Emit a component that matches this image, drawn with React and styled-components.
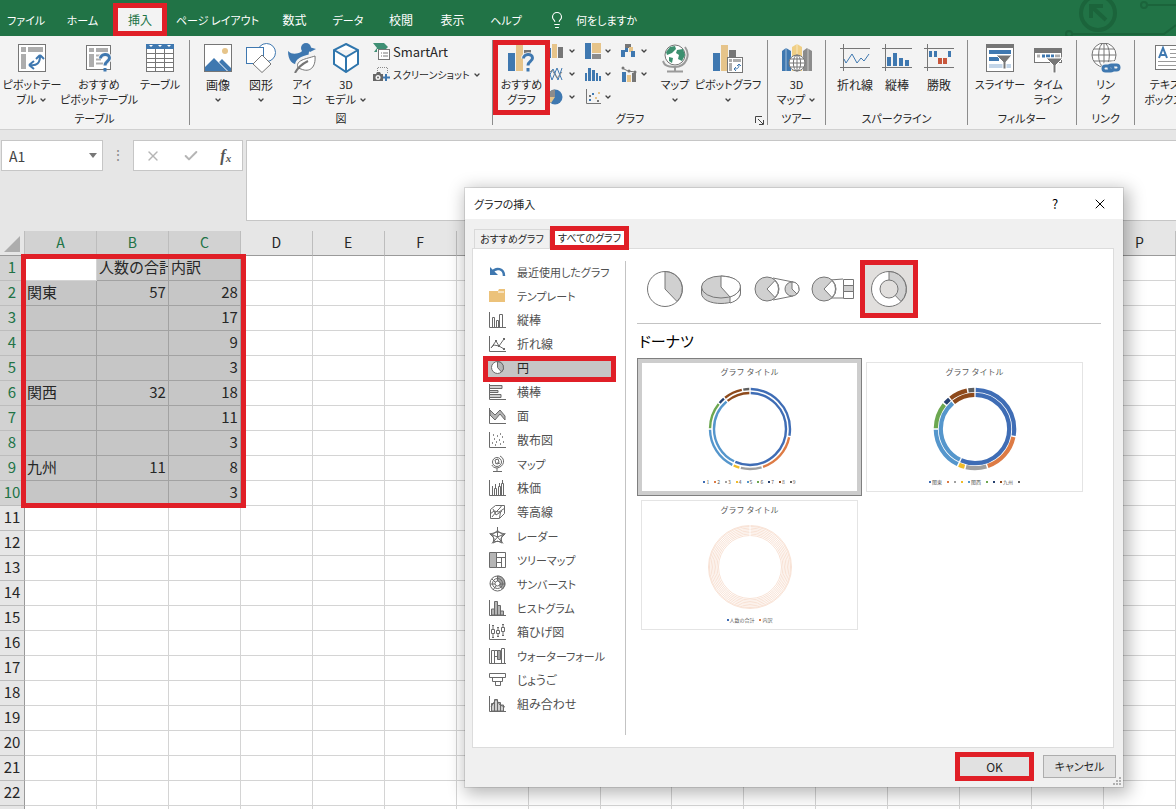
import React, { useState } from "react";
import styled, { createGlobalStyle, css } from "styled-components";
import { ChevronDown, Lightbulb, X, Check } from "lucide-react";

const GRAY = "#767676";
const BLUE = "#3f78b0";
const TAN = "#e6c48a";
const RED = "#e01f27";

const GlobalStyle = createGlobalStyle`
    * {
        box-sizing: border-box;
    }
    body {
        margin: 0;
        font-family: "Noto Sans CJK JP", "Liberation Sans", sans-serif;
        font-size: 12px;
        color: #262626;
        font-feature-settings: "palt";
    }
    button, input {
        font: inherit;
        font-feature-settings: inherit;
        color: inherit;
        border: 0;
        padding: 0;
        margin: 0;
        background: none;
    }
    svg {
        display: block;
        flex: none;
    }
`

// thick red frame around whatever the reader has to click
const marker = css`
    outline: 5px solid ${RED};
    position: relative;
    z-index: 1;
`

const Page = styled.div`
    position: relative;
    height: 100vh;
    overflow: hidden;
    display: flex;
    flex-direction: column;
    background: #fff;
`

/* ---------- tab strip ---------- */

const TabStrip = styled.nav`
    display: flex;
    align-items: flex-end;
    height: 36px;
    flex: none;
    background: #217346;
    overflow: hidden;
`

const RibbonTab = styled.button`
    flex: none;
    width: ${props => props.$width}px;
    height: 33px;
    font-size: ${props => props.$compact ? 11 : 12}px;
    color: #fff;
    white-space: nowrap;
    ${props => props.$active && css`
        ${marker}
        outline-offset: -5px;
        background: #f3f3f3;
        color: #217346;
    `}
`

const TellMe = styled.button`
    display: flex;
    align-items: center;
    gap: 10px;
    height: 33px;
    margin-left: 14px;
    font-size: 11px;
    color: #fff;
    white-space: nowrap;
`

const Circuit = styled.svg`
    margin-left: auto;
`

/* ---------- ribbon ---------- */

const RibbonBar = styled.div`
    display: flex;
    flex: none;
    height: 94px;
    padding: 4px 0;
    background: #f3f3f3;
    border-bottom: 1px solid #d0d0d0;
`

const Group = styled.section`
    display: flex;
    flex-direction: column;
    flex: none;
    justify-content: space-between;
    border-right: 1px solid #8c8c8c;
    &:last-child {
        border-right: 0;
    }
`

const GroupBody = styled.div`
    display: flex;
    height: 71px;
    padding: 0 ${props => props.$right || 0}px 0 ${props => props.$left || 0}px;
`

const GroupFooter = styled.div`
    position: relative;
    text-align: center;
    line-height: 14px;
    font-size: 11px;
    min-height: 14px;
`

const Launcher = styled.button`
    position: absolute;
    right: 3px;
    bottom: 0;
`

const BigButton = styled.button`
    display: flex;
    flex-direction: column;
    align-items: center;
    flex: none;
    width: ${props => props.$width}px;
    height: 75px;
    padding-top: 3px;
    font-size: ${props => props.$compact ? 11 : 12}px;
    line-height: 15px;
    white-space: nowrap;
    span {
        display: flex;
        align-items: center;
        gap: 3px;
        height: 15px;
    }
    svg + span {
        margin-top: 4px;
    }
    ${props => props.$marked && css`
        ${marker}
        outline-offset: -5px;
    `}
`

const SideList = styled.div`
    display: flex;
    flex-direction: column;
    width: 121px;
    padding-left: 2px;
`

const SideButton = styled.button`
    display: flex;
    align-items: center;
    gap: 3px;
    height: 23px;
    font-size: ${props => props.$compact ? 10 : 13}px;
    white-space: nowrap;
`

const ChartGrid = styled.div`
    display: grid;
    grid-template-columns: repeat(3, 36px);
    grid-auto-rows: 23px;
    margin: -1px 0 0 -2px;
`

const ChartMenu = styled.button`
    display: flex;
    align-items: center;
    gap: 2px;
`

/* ---------- formula bar ---------- */

const FormulaBar = styled.div`
    display: flex;
    align-items: flex-start;
    flex: none;
    height: 101px;
    padding: 10px 0 10px 1px;
    background: #e6e6e6;
`

const NameBox = styled.div`
    display: flex;
    align-items: center;
    width: 102px;
    height: 31px;
    padding: 0 5px 0 7px;
    background: #fff;
    border: 1px solid #c6c6c6;
    input {
        flex: 1;
        min-width: 0;
        font-size: 14px;
        color: #444;
        outline: 0;
    }
`

const Grip = styled.div`
    width: 30px;
    line-height: 29px;
    text-align: center;
    font-size: 14px;
    color: #8c8c8c;
`

const FormulaButtons = styled.div`
    display: flex;
    align-items: center;
    justify-content: space-around;
    width: 110px;
    height: 31px;
    background: #fff;
    border: 1px solid #c6c6c6;
`

const FxButton = styled.button`
    font-family: "Liberation Serif", serif;
    font-style: italic;
    font-weight: bold;
    font-size: 16px;
    color: #555;
    sub {
        font-size: 11px;
        vertical-align: -1px;
    }
`

const FormulaInput = styled.input`
    flex: 1;
    height: 81px;
    margin-left: 3px;
    background: #fff;
    border: 1px solid #c6c6c6;
    border-right: 0;
`

/* ---------- sheet ---------- */

const SheetArea = styled.main`
    position: relative;
    flex: 1;
    min-height: 0;
    overflow: hidden;
`

const Sheet = styled.table`
    width: 100%;
    table-layout: fixed;
    border-collapse: separate;
    border-spacing: 0;
    font-size: 15px;
    font-feature-settings: normal;
    th:first-child {
        width: 25px;
    }
`

const ColHead = styled.th`
    height: 25px;
    padding: 0;
    font-weight: normal;
    font-size: 14px;
    line-height: 22px;
    vertical-align: top;
    color: ${props => props.$on ? "#217346" : "#262626"};
    background: ${props => props.$on ? "#d2d2d2" : "#e6e6e6"};
    border-right: 1px solid #bdbdbd;
    border-bottom: 1px solid #9a9a9a;
    svg {
        margin: 5px 0 0 4px;
    }
`

const RowHead = styled(ColHead)`
    font-size: 15px;
    border-right-color: #9a9a9a;
    border-bottom-color: #bdbdbd;
`

const Cell = styled.td`
    height: 25px;
    padding: 0 2px;
    line-height: 22px;
    vertical-align: top;
    white-space: nowrap;
    overflow: hidden;
    text-align: ${props => props.$number ? "right" : "left"};
    background: ${props => props.$on ? "#c6c6c6" : "#fff"};
    border-right: 1px solid ${props => props.$on ? "#a2a2a2" : "#d4d4d4"};
    border-bottom: 1px solid ${props => props.$on ? "#a2a2a2" : "#d4d4d4"};
`

const RangeFrame = styled.div`
    position: absolute;
    left: 21px;
    top: 23px;
    width: calc((100% - 25px) / 16 * 3 + 9px);
    height: 254px;
    border: 5px solid ${RED};
    pointer-events: none;
`

/* ---------- dialog ---------- */

const DialogBox = styled.div`
    position: absolute;
    left: 465px;
    top: 188px;
    z-index: 5;
    width: 658px;
    background: #f0f0f0;
    box-shadow: 0 0 0 1px rgba(0, 0, 0, 0.1), 3px 4px 16px 3px rgba(0, 0, 0, 0.28);
`

const TitleBar = styled.header`
    display: flex;
    align-items: center;
    height: 31px;
    padding: 0 15px 0 9px;
    background: #fff;
    h1 {
        flex: 1;
        margin: 0;
        font-size: 11px;
        line-height: 14px;
        font-weight: normal;
    }
    button {
        width: 16px;
        font-size: 13px;
        line-height: 16px;
        color: #000;
    }
    button + button {
        margin-left: 29px;
    }
`

const DialogTabs = styled.div`
    display: flex;
    align-items: flex-end;
    height: 29px;
    padding-left: 9px;
`

const DialogTab = styled.button`
    height: 19px;
    width: 76px;
    font-size: 10px;
    line-height: 18px;
    white-space: nowrap;
    border: 1px solid #d9d9d9;
    border-bottom: 0;
    ${props => props.$active && css`
        ${marker}
        outline-offset: -5px;
        width: 79px;
        height: 24px;
        margin-bottom: -2px;
        border: 0;
        background: #fff;
    `}
`

const Panel = styled.div`
    display: flex;
    margin: 0 9px 0 7px;
    height: 500px;
    background: #fff;
    border: 1px solid #dcdcdc;
`

const TypeList = styled.ul`
    list-style: none;
    margin: 12px 0 12px 11px;
    padding: 0 10px 0 0;
    border-right: 1px solid #c3c3c3;
`

const TypeItem = styled.button`
    display: flex;
    align-items: center;
    gap: 11px;
    width: 131px;
    height: 24px;
    padding: 0 0 3px 5px;
    font-size: ${props => props.$compact ? 11 : 12}px;
    color: #505050;
    white-space: nowrap;
    ${props => props.$active && css`
        ${marker}
        outline-offset: -4px;
        background: #c6c6c6;
        color: #262626;
    `}
`

const Preview = styled.div`
    flex: 1;
    padding: 12px 12px 0 10px;
    h2 {
        margin: 6px 0 6px 3px;
        font-size: 15px;
        line-height: 22px;
        font-weight: normal;
        color: #000;
    }
`

const Subtypes = styled.div`
    display: flex;
    padding-bottom: 6px;
    margin-left: 1px;
    border-bottom: 1px solid #c3c3c3;
`

const Subtype = styled.button`
    display: flex;
    align-items: center;
    justify-content: center;
    width: 56px;
    height: 56px;
    ${props => props.$active && css`
        ${marker}
        outline-offset: -4px;
        background: #e1dfdd;
    `}
`

const Gallery = styled.div`
    display: flex;
    flex-wrap: wrap;
    margin-left: 1px;
`

const Thumb = styled.button`
    width: 225px;
    height: 138px;
    padding: 3px;
    border: 1px solid ${props => props.$active ? "#7f7f7f" : "transparent"};
    background: ${props => props.$active ? "#cdcdcd" : "none"};
`

const ThumbPaper = styled.div`
    display: flex;
    flex-direction: column;
    align-items: center;
    height: 130px;
    padding-top: 3px;
    background: #fff;
    border: 1px solid ${props => props.$active ? "#cdcdcd" : "#e4e4e4"};
`

const ThumbTitle = styled.div`
    font-size: 8px;
    line-height: 12px;
    color: #595959;
    font-feature-settings: normal;
    margin-bottom: 9px;
`

const Legend = styled.div`
    display: flex;
    gap: 5px;
    margin-top: 7px;
    font-size: 5px;
    line-height: 8px;
    color: #595959;
    span {
        display: flex;
        align-items: center;
        gap: 1px;
    }
`

const Swatch = styled.i`
    width: 2px;
    height: 2px;
    background: ${props => props.$color};
`

const DialogFooter = styled.footer`
    display: flex;
    justify-content: flex-end;
    gap: 12px;
    height: 39px;
    padding: 7px 7px 0 0;
`

const PushButton = styled.button`
    width: 73px;
    height: 23px;
    font-size: ${props => props.$compact ? 11 : 12}px;
    line-height: 19px;
    background: #e1e1e1;
    border: 1px solid #adadad;
    ${props => props.$marked && css`
        ${marker}
        outline-offset: -2px;
    `}
`

const ResizeGrip = styled.svg`
    position: absolute;
    right: 2px;
    bottom: 2px;
`

/* ---------- icons ---------- */

const Big = ({ children }) => (
    <svg width="30" height="30" viewBox="0 0 30 30" fill="none" stroke={GRAY}>{children}</svg>
)
const Small = ({ children }) => (
    <svg width="18" height="18" viewBox="0 0 18 18" fill="none" stroke="none">{children}</svg>
)
const Mini = ({ children }) => (
    <svg width="17" height="17" viewBox="0 0 17 17" fill="none" stroke="#6a6a6a">{children}</svg>
)
const Chevron = () => <ChevronDown size={8} strokeWidth={4} color="#444" />

const Question = () => (
    <>
        <path d="M16.5 15.5c0-4.5 9-5.500 9-.5 0 3.500-4.500 3.500-4.500 7.500" stroke="#f3f3f3" strokeWidth="5" />
        <path d="M16.500 15.500c0-5 9-5.500 9-.5 0 3.500-4.500 3.500-4.500 7.500M21 25v3.500" stroke={BLUE} strokeWidth="3" />
    </>
)

const PivotArt = () => (
    <>
        <rect x="1.500" y="1.500" width="27" height="27" fill="#fff" stroke={GRAY} />
        <path d="M4 4h5v5H4zM11 4h15v5H11zM4 11h5v15H4z" fill="#adadad" stroke="none" />
        <path d="M13 22c7 1 10-2 10-9M23 12l-4 4M23 12l4 4M12 22l5-4M12 22l5 4" stroke={BLUE} strokeWidth="2" />
    </>
)

const GlobeLines = ({ cx, cy, r, fill = "#fff" }) => (
    <g>
        <circle cx={cx} cy={cy} r={r} fill={fill} />
        <ellipse cx={cx} cy={cy} rx={r * 0.45} ry={r} />
        <path d={`M${cx - r} ${cy}h${r * 2}M${cx} ${cy - r}v${r * 2}M${cx - r * 0.85} ${cy - r * 0.5}h${r * 1.7}M${cx - r * 0.85} ${cy + r * 0.5}h${r * 1.7}`} />
    </g>
)

const icons = {
    pivot: <Big><PivotArt /></Big>,
    recPivot: <Big>
        <rect x="2.500" y="2.500" width="24" height="24" fill="#fff" />
        <path d="M5 5h5v4H5zM12 5h12v4H12zM5 11h5v13H5z" fill="#adadad" stroke="none" />
        <path d="M12 12.500h7M12 16.500h5M12 20.500h7" stroke="#adadad" strokeWidth="2" />
        <Question />
    </Big>,
    table: <Big>
        <rect x="1.500" y="1.500" width="27" height="27" fill="#fff" />
        <path d="M1 1h28v5H1z" fill={BLUE} stroke="none" />
        <path d="M4 2h4l-2 2zM13 2h4l-2 2zM22 2h4l-2 2z" fill="#fff" stroke="none" />
        <path d="M10.500 6v22M19.500 6v22M1 10.500h28M1 15.500h28M1 19.500h28M1 24.500h28" />
    </Big>,
    picture: <Big>
        <rect x="1.500" y="1.500" width="27" height="27" fill="#fff" />
        <circle cx="22" cy="8" r="3" fill={TAN} stroke="none" />
        <path d="M2 28v-4l9-9 13 13zM16 19l3-3 9 9v3h-3z" fill={BLUE} stroke="none" />
    </Big>,
    shapes: <Big>
        <circle cx="20.500" cy="9.500" r="9" fill="#fff" stroke={BLUE} />
        <rect x=".5" y="4.500" width="17" height="16" fill="#fff" stroke={BLUE} />
        <path d="M16 12l9 9-9 8.500L7 21z" fill="#fff" stroke={GRAY} />
    </Big>,
    duck: <Big>
        <circle cx="19" cy="5" r="5" fill={BLUE} stroke="none" />
        <path d="M22 4l7 2-6 3zM1 8c4 4 9 3 13 1 2-1 1-3 1-5l8 1c0 3-2 4-1 8 0 6-4 9-9 9C5 22 1 17 1 8z" fill={BLUE} stroke="none" />
        <path d="M10 24c-1-8 7-9 18-12 0 12-5 17-15 14z" stroke="#f3f3f3" strokeWidth="4" />
        <path d="M11 25c-3-8 8-9 17-12 1 11-5 17-14 13z" fill="#fff" stroke={GRAY} />
        <path d="M8 30c3-6 7-9 13-12" stroke={GRAY} strokeWidth="2" />
    </Big>,
    cube: <Big>
        <path d="M15 1l12 6v14l-12 8-12-8V7zM3 7l12 7 12-7M15 14v15M15 14z" fill="#fff" stroke="#2f76ad" strokeWidth="2" />
    </Big>,
    recChart: <Big>
        <path d="M1 10h7v18H1z" fill={BLUE} stroke="none" />
        <path d="M9 2h7v26H9z" fill={TAN} stroke="none" />
        <path d="M17 7h7v5h-7z" fill={GRAY} stroke="none" />
        <Question />
    </Big>,
    globe: <Big>
        <path d="M25 4c6 8 1 20-10 20S4 20 3 18" stroke="#9a9a9a" strokeWidth="2" />
        <circle cx="15" cy="12" r="10" fill="#fff" />
        <path d="M10 4l5-1 1 3-4 4-5 2-1-3zM17 7l6-1 2 6-3 6-4-2 1-4-3-2zM9 14l4 1-1 5-3-2z" fill="#3d9070" stroke="none" />
        <path d="M15 24v4M7 28.500h16" stroke="#9a9a9a" strokeWidth="2" />
    </Big>,
    pivotChart: <Big>
        <path d="M0 10h7v18H0z" fill={BLUE} stroke="none" />
        <path d="M8 2h7v26H8z" fill={TAN} stroke="none" />
        <path d="M16 7h7v8h-7z" fill={GRAY} stroke="none" />
        <rect x="14.500" y="14.500" width="15" height="15" fill="#fff" />
        <path d="M16 16h3v3h-3zM20 16h8v3h-8zM16 20h3v8h-3z" fill="#adadad" stroke="none" />
        <path d="M21 26c4 0 5-1 5-5M26 21l-2 2M26 21l2 2M21 26l2-2M21 26l2 2" stroke={BLUE} />
    </Big>,
    map3d: <Big>
        <path d="M0 8l4-3 5 3v20H0z" fill={BLUE} stroke="none" />
        <path d="M10 4l5-3 5 3v24H10z" fill="#f0cf85" stroke="none" />
        <path d="M21 8l4-3 5 3v20h-9z" fill="#8c8c8c" stroke="none" />
        <path d="M4 5v23M15 1v27M26 5v23" stroke="#fff" opacity=".5" />
        <GlobeLines cx={15} cy={20} r={8} />
    </Big>,
    sparkLine: <Big>
        <path d="M3.500 1v27M0 5.500h30M0 24.500h30" />
        <path d="M4 16l2 4 6-9 5 9 4-5 3 3 5-7" stroke={BLUE} />
    </Big>,
    sparkCol: <Big>
        <path d="M3.500 1v27M0 5.500h30M0 24.500h30" />
        <path d="M5 14h4v9H5zM11 10h4v13h-4zM17 15h4v8h-4zM23 17h4v6h-4z" fill={BLUE} stroke="none" />
    </Big>,
    winLoss: <Big>
        <path d="M3.500 1v27M0 5.500h30M0 24.500h30" />
        <path d="M5 8h3v6H5zM10 8h3v6h-3zM24 8h3v6h-3z" fill={BLUE} stroke="none" />
        <path d="M14 15h4v6h-4zM19 15h4v6h-4z" fill="#c8573c" stroke="none" />
    </Big>,
    slicer: <Big>
        <rect x="1.500" y="1.500" width="27" height="27" fill="#fff" />
        <path d="M1 1h28v4H1z" fill={GRAY} stroke="none" />
        <path d="M4 7h22v4H4zM4 14h10v4H4z" fill={BLUE} stroke="none" />
        <path d="M4 21h22v4H4z" fill="#c3d5e8" stroke="none" />
        <path d="M11 12h16l-6 7v7h-3v-7z" fill={GRAY} stroke="#fff" />
    </Big>,
    timeline: <Big>
        <rect x="1.500" y="5.500" width="27" height="14" fill="#fff" />
        <path d="M1 5h28v5H1z" fill={GRAY} stroke="none" />
        <path d="M4 13h3M22 13h5" stroke="#adadad" strokeWidth="3" />
        <path d="M9 13h3M13 13h4M18 13h3" stroke={BLUE} strokeWidth="3" />
        <path d="M13 15h17l-7 7v8h-3v-8z" fill={GRAY} stroke="#fff" />
    </Big>,
    link: <Big>
        <GlobeLines cx={13} cy={12} r={12} />
        <g stroke="#f3f3f3" strokeWidth="6">
            <rect x="13" y="22" width="9" height="6" rx="3" /><rect x="20" y="21" width="9" height="6" rx="3" />
        </g>
        <g stroke={BLUE} strokeWidth="3">
            <rect x="12" y="23" width="10" height="5" rx="2.500" /><rect x="18" y="22" width="10" height="5" rx="2.500" />
        </g>
    </Big>,
    textBox: <Big>
        <rect x="1.500" y="2.500" width="28" height="24" fill="#fff" />
        <path d="M5 15L9 5l4 10M6.500 12h5" stroke={BLUE} strokeWidth="2" />
        <path d="M16 6.500h11M16 10.500h11M16 14.500h11M4 18.500h23M4 22.500h23" stroke="#9a9a9a" />
    </Big>,
    smartArt: <svg width="17" height="17" viewBox="0 0 17 17" fill="none">
        <path d="M0 0h11l4 4-2 2H4v3H1l3-4z" fill="#3f8f74" />
        <rect x="5.500" y="6.500" width="11" height="10" fill="#fff" stroke={GRAY} />
        <path d="M8 10h1M10 10h5M8 13h1M10 13h5" stroke={GRAY} />
    </svg>,
    screenshot: <svg width="17" height="17" viewBox="0 0 17 17" fill="none">
        <path d="M4.500 7V1.500h10V8" stroke="#8c8c8c" strokeDasharray="1 1" />
        <path d="M0 8h3l1-2h3l1 2h2v7H0z" fill="#666" />
        <circle cx="5" cy="11.500" r="2.500" fill="#f3f3f3" /><circle cx="5" cy="11.500" r="1" fill="#666" />
        <path d="M13 8v7M10 11.500h7" stroke={BLUE} strokeWidth="2" />
    </svg>,
}

const chartMenus = [
    <Small><path d="M0 6h3v10H0z" fill={BLUE} /><path d="M4 2h5v14H4z" fill={TAN} /><path d="M10 5h5v11h-5z" fill={GRAY} /></Small>,
    <Small><path d="M1 1h6v16H1z" fill={BLUE} /><path d="M8 1h9v10H8z" fill={TAN} /><path d="M8 12h9v5H8z" fill="#8c8c8c" /></Small>,
    <Small><path d="M1 8h4v7H1zM5 2h3v8H5z" fill={BLUE} /><path d="M5 2h6v4H5z" fill={GRAY} /><path d="M9 5h4v5H9z" fill={TAN} /><path d="M11 9h4v6h-4z" fill={BLUE} /></Small>,
    <Small><path d="M0 4l4 11L9 3l5 12M0 13L5 4l5 11 4-12" stroke={BLUE} /><path d="M0 9l4-4 5 8 5-6" stroke="#8c8c8c" /></Small>,
    <Small><path d="M1 8h2v8H1zM4 3h3v13H4zM8 5h3v11H8zM12 8h2v8h-2zM15 11h2v5h-2z" fill={BLUE} /></Small>,
    <Small><path d="M2 7h4v10H2z" fill={BLUE} /><path d="M7 10h4v7H7z" fill={TAN} /><path d="M12 8h4v9h-4z" fill={GRAY} /><path d="M2 3l6 3 7 1" stroke={GRAY} /><circle cx="3" cy="3" r="1.500" fill={GRAY} /><circle cx="9" cy="6" r="1.500" fill={GRAY} /><circle cx="15" cy="7" r="1.500" fill={GRAY} /></Small>,
    <Small><circle cx="7" cy="9" r="7.500" fill={BLUE} /><path d="M7 9V1.500A7.500 7.500 0 0 0-.5 9z" fill="#8c8c8c" /><path d="M7 9H-.5A7.500 7.500 0 0 0 3 15z" fill={TAN} /></Small>,
    <Small><path d="M2.500 1v14.500H17" stroke={GRAY} /><path d="M5 11h2v2H5zM8 5h2v2H8z" fill={BLUE} /><path d="M11 9h2v2h-2zM14 4h2v2h-2z" fill={TAN} /><path d="M5 7h2v2H5zM13 12h2v2h-2z" fill={GRAY} /></Small>,
]

const axes = <path d="M.5 1v15.500H17" />

const chartTypes = [
    ["最近使用したグラフ", <Mini><path d="M3 9c4-5 12-4 12 4" stroke={BLUE} strokeWidth="2.500" /><path d="M1 4v8h8z" fill={BLUE} stroke="none" /></Mini>],
    ["テンプレート", <Mini><path d="M0 4h9l1-2h6v13H0z" fill="#ecc27a" stroke="none" /><path d="M9 5h6" stroke="#fff" /></Mini>],
    ["縦棒", <Mini>{axes}<path d="M3.500 16V6.500h2V16M7.500 16V9.500h2V16M10.500 16V3.500h3V16" /></Mini>],
    ["折れ線", <Mini>{axes}<path d="M2 13l5-7 3 5 5-7M2 13l3-3 5 1 5 3" /><path d="M6 5h2v2H6zM9 10h2v2H9zM14 13h2v2h-2zM14 3h2v2h-2z" fill="#6a6a6a" stroke="none" /></Mini>],
    ["円", <Mini><circle cx="8.500" cy="8.500" r="6" fill="#fff" /><path d="M8.500 8.500v-6a6 6 0 0 1 4 10.500z" fill="#b5b5b5" /></Mini>],
    ["横棒", <Mini>{axes}<path d="M1 2.500h12v3H1M1 7.500h8v2H1M1 11.500h11v3H1" fill="#d0d0d0" /></Mini>],
    ["面", <Mini>{axes}<path d="M1 3l5 5 5-5 5 6v4l-5-6-5 6-5-5z" fill="#b5b5b5" /></Mini>],
    ["散布図", <Mini>{axes}<path d="M3 12h1M5 8h1M7 11h1M8 5h1M10 9h1M11 3h1M13 6h1M14 11h1M6 14h1M11 13h1M4 4h1" strokeWidth="1.500" /></Mini>],
    ["マップ", <Mini><circle cx="8" cy="7" r="4.500" /><path d="M11 1c6 3 4 11-3 12-3 0-5-2-5-3M8 13v3M4 16.500h9M6 5l3-1 1 3-3 2zM8 9l3-1" /></Mini>],
    ["株価", <Mini>{axes}<path d="M3.500 16V7M5.500 16V9.500h2V16M9.500 16V7.500h2V16M14.500 16V4.500h-2V16M6.500 9V5M10.500 7V4M13.500 4V1" /></Mini>],
    ["等高線", <Mini><path d="M1.500 6.500l5-4h9v8l-5 5h-9zM1 11l4-3 5 1 6-4M3 14l4-5 4-4 2-3M4 6l3 6 6-4M10.500 15l1-6" /></Mini>],
    ["レーダー", <Mini><path d="M8.500 3.500l5 4-2 7h-6l-2-7zM8.500 0v10M16.500 6.500l-8 3.500-8-3.500M14 16.500L8.500 10 3 16.500M1 7l7.500-2 7.500 2-4 4 1 5-4.500-2L4 16l1-5z" /></Mini>],
    ["ツリーマップ", <Mini><path d="M.5 1.500h7v15h-7z" fill="#b5b5b5" /><path d="M7.500 1.500h9v15h-9zM7.500 6.500h9M12.500 6.500v10M7.500 11.500h5" /></Mini>],
    ["サンバースト", <Mini><circle cx="8.500" cy="8.500" r="7.500" fill="#fff" /><path d="M8.500 1a7.500 7.500 0 0 1 5 13l-3-3a3 3 0 0 0-2-5z" fill="#a5a5a5" /><circle cx="8.500" cy="8.500" r="5" /><circle cx="8.500" cy="8.500" r="2.500" fill="#fff" /><path d="M6 9H1M7 11l-3 4M6 7L3 4M11 9h5" /></Mini>],
    ["ヒストグラム", <Mini>{axes}<path d="M2.500 16v-6h3v6zM5.500 16V2.500h3V16zM8.500 16V6.500h3V16zM11.500 16v-4h3v4z" fill="#b5b5b5" /></Mini>],
    ["箱ひげ図", <Mini>{axes}<path d="M4 2v13M9 4v10M14 1v12M3 2.500h2M8 4.500h2M13 1.500h2M3 14.500h2M8 13.500h2M13 12.500h2" /><path d="M2.500 6.500h3v4h-3zM7.500 7.500h3v3h-3zM12.500 4.500h3v4h-3z" fill="#fff" /></Mini>],
    ["ウォーターフォール", <Mini>{axes}<path d="M2.500 16V3.500h3V16M5.500 3.500h3v6h-3M12.500 16V1.500h3V16" /><path d="M8.500 3.500h3v9h-3z" fill="#a5a5a5" /></Mini>],
    ["じょうご", <Mini><path d="M.5 2.500h16v4H.5zM3.500 6.500h10v4h-10zM6.500 10.500h5v4h-5z" fill="#fff" /></Mini>],
    ["組み合わせ", <Mini>{axes}<path d="M2.500 16V8.500h3V16zM5.500 16V4.500h3V16zM8.500 16V7.500h3V16zM11.500 16v-6h3v6z" fill="#d0d0d0" /><path d="M2 12l5-8 4 6 5 2" /></Mini>],
]

const Pic = ({ width, children }) => (
    <svg width={width} height="38" viewBox={`0 0 ${width} 38`} fill="#fff" stroke="#767676">{children}</svg>
)

const subtypes = [
    <Pic width={38}><circle cx="19" cy="19" r="17.500" /><path d="M19 19V1.500A17.500 17.500 0 0 1 31 31.500z" fill="#d0d0d0" /></Pic>,
    <Pic width={42}>
        <path d="M1.500 17v6c0 14 39 14 39 0v-6z" fill="#d0d0d0" />
        <path d="M30 27v6c7-2 10-6 10.500-10v-6z" />
        <ellipse cx="21" cy="17" rx="19.500" ry="11" fill="#d0d0d0" />
        <path d="M21 6v11l9 10c15-5 15-20-9-21z" />
    </Pic>,
    <Pic width={46}>
        <path d="M19 8l20 4M19 30l20-4" />
        <circle cx="13" cy="19" r="12" fill="#d0d0d0" />
        <path d="M13 19l8-8.500a12 12 0 0 1 0 17z" />
        <circle cx="38" cy="19" r="7" fill="#d0d0d0" />
        <path d="M38 19v-7a7 7 0 0 1 5 12z" />
    </Pic>,
    <Pic width={44}>
        <path d="M19 10l13-1M19 28l13 0" />
        <circle cx="13" cy="19" r="12" fill="#d0d0d0" />
        <path d="M13 19l8-8.500a12 12 0 0 1 0 17z" />
        <path d="M32.500 9.500h10v19h-10z" />
        <path d="M32.500 15.500h10v6h-10z" fill="#d0d0d0" />
    </Pic>,
    <Pic width={38}>
        <circle cx="19" cy="19" r="17.500" />
        <path d="M19 19V1.500A17.500 17.500 0 0 1 31 31.500z" fill="#d0d0d0" />
        <circle cx="19" cy="19" r="9" fill="#e1dfdd" />
    </Pic>,
]

/* ---------- donut thumbnails ---------- */

const OUTER = [[28, "#3f6db5"], [17, "#dd7b45"], [9, "#a0a0a0"], [3, "#f0bd2a"], [18, "#5596cc"], [11, "#6ca750"], [3, "#26406f"], [8, "#8e4a1c"], [3, "#5f5f5f"]]
const INNER = [[57, "#3f6db5"], [32, "#5596cc"], [11, "#8e4a1c"]]

function arcs(parts, radius, width) {
    let from = 0
    return parts.map(([value, color]) => {
        const start = from
        from += value
        return <circle
            key={start}
            r={radius}
            stroke={color}
            strokeWidth={width}
            pathLength="100"
            strokeDasharray={`${value - 0.6} ${100.6 - value}`}
            strokeDashoffset={-start - 0.3}
            transform="rotate(-90)"
        />
    })
}

const Donut = ({ outer, inner, width }) => (
    <svg width="84" height="84" viewBox="-42 -42 84 84" fill="none">
        {arcs(OUTER, outer, width)}
        {arcs(INNER, inner, width)}
    </svg>
)

const RingDonut = () => (
    <svg width="84" height="84" viewBox="-42 -42 84 84" fill="none" stroke="#f0c4ab">
        {[31.5, 33, 34.5, 36, 37.5, 39, 40.5, 41.5].map(r => <circle key={r} r={r} strokeWidth=".5" />)}
        <path d="M0-42v11" stroke="#fff" />
    </svg>
)

const palette = OUTER.map(([, color]) => color)
const thumbs = [
    { chart: <Donut outer={40} inner={36} width={2.4} />, legend: palette.map((color, i) => [color, i + 1]) },
    { chart: <Donut outer={39.2} inner={34.2} width={4.2} />, legend: palette.map((color, i) => [color, { 0: "関東", 4: "関西", 7: "九州" }[i] || ""]) },
    { chart: <RingDonut />, legend: [["#3f6db5", "人数の合計"], ["#dd7b45", "内訳"]] },
]

/* ---------- data ---------- */

const tabs = [["ファイル", 52], ["ホーム", 61], ["挿入", 54], ["ページ レイアウト", 101], ["数式", 53], ["データ", 54], ["校閲", 52], ["表示", 51], ["ヘルプ", 56]]
const columns = "ABCDEFGHIJKLMNOP".split("")
const rows = [
    ["", "人数の合計", "内訳"],
    ["関東", 57, 28],
    ["", "", 17],
    ["", "", 9],
    ["", "", 3],
    ["関西", 32, 18],
    ["", "", 11],
    ["", "", 3],
    ["九州", 11, 8],
    ["", "", 3],
]

const isKana = text => /[ァ-ヶ]/.test(text)

function Tool({ icon, lines, width, menu, compact, marked }) {
    return (
        <BigButton $width={width} $compact={compact} $marked={marked}>
            {icons[icon]}
            {lines.map((line, i) => (
                <span key={i}>{line}{menu && i === lines.length - 1 && <Chevron />}</span>
            ))}
        </BigButton>
    )
}

function Ribbon() {
    return (
        <RibbonBar>
            <Group>
                <GroupBody $right={3}>
                    <Tool icon="pivot" lines={["ピボットテー", "ブル"]} width={64} menu compact />
                    <Tool icon="recPivot" lines={["おすすめ", "ピボットテーブル"]} width={70} compact />
                    <Tool icon="table" lines={["テーブル"]} width={52} compact />
                </GroupBody>
                <GroupFooter>テーブル</GroupFooter>
            </Group>
            <Group>
                <GroupBody $left={7}>
                    <Tool icon="picture" lines={["画像", ""]} width={42} menu />
                    <Tool icon="shapes" lines={["図形", ""]} width={44} menu />
                    <Tool icon="duck" lines={["アイ", "コン"]} width={38} compact />
                    <Tool icon="cube" lines={["3D", "モデル"]} width={50} menu compact />
                    <SideList>
                        <SideButton>{icons.smartArt}SmartArt</SideButton>
                        <SideButton $compact>{icons.screenshot}スクリーンショット<Chevron /></SideButton>
                    </SideList>
                </GroupBody>
                <GroupFooter>図</GroupFooter>
            </Group>
            <Group>
                <GroupBody $right={5}>
                    <Tool icon="recChart" lines={["おすすめ", "グラフ"]} width={57} compact marked />
                    <ChartGrid>
                        {chartMenus.map((icon, i) => <ChartMenu key={i}>{icon}<Chevron /></ChartMenu>)}
                    </ChartGrid>
                    <Tool icon="globe" lines={["マップ", ""]} width={38} menu compact />
                    <Tool icon="pivotChart" lines={["ピボットグラフ", ""]} width={68} menu compact />
                </GroupBody>
                <GroupFooter>
                    グラフ
                    <Launcher aria-label="グラフ">
                        <svg width="9" height="9" viewBox="0 0 9 9" fill="none" stroke="#444">
                            <path d="M.5 7V.5H7M3 3l5 5M8.500 4v4.500H4" />
                        </svg>
                    </Launcher>
                </GroupFooter>
            </Group>
            <Group>
                <GroupBody>
                    <Tool icon="map3d" lines={["3D", "マップ"]} width={57} menu compact />
                </GroupBody>
                <GroupFooter>ツアー</GroupFooter>
            </Group>
            <Group>
                <GroupBody $left={8} $right={7}>
                    <Tool icon="sparkLine" lines={["折れ線"]} width={42} />
                    <Tool icon="sparkCol" lines={["縦棒"]} width={42} />
                    <Tool icon="winLoss" lines={["勝敗"]} width={42} />
                </GroupBody>
                <GroupFooter>スパークライン</GroupFooter>
            </Group>
            <Group>
                <GroupBody $left={4} $right={8}>
                    <Tool icon="slicer" lines={["スライサー"]} width={56} compact />
                    <Tool icon="timeline" lines={["タイム", "ライン"]} width={40} compact />
                </GroupBody>
                <GroupFooter>フィルター</GroupFooter>
            </Group>
            <Group>
                <GroupBody>
                    <Tool icon="link" lines={["リン", "ク"]} width={57} compact />
                </GroupBody>
                <GroupFooter>リンク</GroupFooter>
            </Group>
            <Group>
                <GroupBody $left={4}>
                    <Tool icon="textBox" lines={["テキスト", "ボックス"]} width={60} menu compact />
                </GroupBody>
            </Group>
        </RibbonBar>
    )
}

function Spreadsheet() {
    return (
        <SheetArea>
            <Sheet>
                <thead>
                    <tr>
                        <ColHead aria-label="すべて選択">
                            <svg width="17" height="17" viewBox="0 0 17 17"><path d="M16 0v16H0z" fill="#adadad" /></svg>
                        </ColHead>
                        {columns.map((name, c) => <ColHead key={name} $on={c < 3}>{name}</ColHead>)}
                    </tr>
                </thead>
                <tbody>
                    {Array.from({ length: 23 }, (_, r) => (
                        <tr key={r}>
                            <RowHead $on={r < 10}>{r + 1}</RowHead>
                            {columns.map((name, c) => {
                                const value = rows[r] ? rows[r][c] : ""
                                return <Cell
                                    key={name}
                                    $on={r < 10 && c < 3 && r + c > 0}
                                    $number={typeof value === "number"}
                                >{value}</Cell>
                            })}
                        </tr>
                    ))}
                </tbody>
            </Sheet>
            <RangeFrame />
        </SheetArea>
    )
}

function ChartDialog() {
    const [type, setType] = useState(4)
    const [subtype, setSubtype] = useState(4)
    const [thumb, setThumb] = useState(0)

    return (
        <DialogBox role="dialog" aria-label="グラフの挿入">
            <TitleBar>
                <h1>グラフの挿入</h1>
                <button>?</button>
                <button aria-label="閉じる"><X size={16} strokeWidth={1.5} /></button>
            </TitleBar>
            <DialogTabs>
                <DialogTab>おすすめグラフ</DialogTab>
                <DialogTab $active>すべてのグラフ</DialogTab>
            </DialogTabs>
            <Panel>
                <TypeList>
                    {chartTypes.map(([name, icon], i) => (
                        <li key={name}>
                            <TypeItem $compact={isKana(name)} $active={i === type} onClick={() => setType(i)}>
                                {icon}{name}
                            </TypeItem>
                        </li>
                    ))}
                </TypeList>
                <Preview>
                    <Subtypes>
                        {subtypes.map((pic, i) => (
                            <Subtype key={i} $active={i === subtype} onClick={() => setSubtype(i)}>{pic}</Subtype>
                        ))}
                    </Subtypes>
                    <h2>ドーナツ</h2>
                    <Gallery>
                        {thumbs.map(({ chart, legend }, i) => (
                            <Thumb key={i} $active={i === thumb} onClick={() => setThumb(i)}>
                                <ThumbPaper $active={i === thumb}>
                                    <ThumbTitle>グラフ タイトル</ThumbTitle>
                                    {chart}
                                    <Legend>
                                        {legend.map(([color, label], n) => (
                                            <span key={n}><Swatch $color={color} />{label}</span>
                                        ))}
                                    </Legend>
                                </ThumbPaper>
                            </Thumb>
                        ))}
                    </Gallery>
                </Preview>
            </Panel>
            <DialogFooter>
                <PushButton $marked>OK</PushButton>
                <PushButton $compact>キャンセル</PushButton>
            </DialogFooter>
            <ResizeGrip width="8" height="8" viewBox="0 0 8 8" fill="#b0b0b0">
                <path d="M6 0h2v2H6zM3 3h2v2H3zM6 3h2v2H6zM0 6h2v2H0zM3 6h2v2H3zM6 6h2v2H6z" />
            </ResizeGrip>
        </DialogBox>
    )
}

export default function App() {
    return (
        <Page>
            <GlobalStyle />
            <TabStrip>
                {tabs.map(([name, width]) => (
                    <RibbonTab key={name} $width={width} $compact={isKana(name)} $active={name === "挿入"}>{name}</RibbonTab>
                ))}
                <TellMe><Lightbulb size={18} strokeWidth={1.5} />何をしますか</TellMe>
                <Circuit width="112" height="36" viewBox="0 0 112 36" fill="none" stroke="#1b643b">
                    <circle cx="34" cy="13" r="17" strokeWidth="4" />
                    <path d="M42 20L28 7M27 18V6h12" strokeWidth="4" />
                    <circle cx="80" cy="5" r="3" strokeWidth="2" />
                    <path d="M84 5h28M8 34h92l12-9" strokeWidth="2" />
                    <circle cx="5" cy="34" r="3" strokeWidth="2" />
                </Circuit>
            </TabStrip>
            <Ribbon />
            <FormulaBar>
                <NameBox>
                    <input aria-label="名前ボックス" defaultValue="A1" />
                    <button aria-label="名前の一覧">
                        <svg width="8" height="5" viewBox="0 0 8 5"><path d="M0 0h8L4 5z" fill="#777" /></svg>
                    </button>
                </NameBox>
                <Grip>⋮</Grip>
                <FormulaButtons>
                    <button aria-label="キャンセル"><X size={16} strokeWidth={2} color="#b5b5b5" /></button>
                    <button aria-label="入力"><Check size={16} strokeWidth={3} color="#b5b5b5" /></button>
                    <FxButton>f<sub>x</sub></FxButton>
                </FormulaButtons>
                <FormulaInput aria-label="数式バー" />
            </FormulaBar>
            <Spreadsheet />
            <ChartDialog />
        </Page>
    )
}
